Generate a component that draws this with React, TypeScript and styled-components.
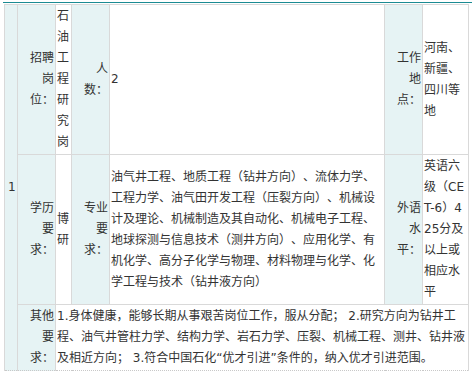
import React from "react";
import styled, { createGlobalStyle } from "styled-components";

const GlobalStyle = createGlobalStyle`
  body {
    margin: 0;
    background: #fff;
    font-family: "DejaVu Sans", "Noto Sans CJK SC", sans-serif;
    font-size: 12px;
    color: #333;
    text-spacing-trim: space-all;
  }
`;

const Page = styled.div`
  padding-top: 2px;
`;

const TopRule = styled.div`
  height: 1px;
  margin-left: 3px;
  background: #1b8b93;
`;

const Table = styled.table`
  margin: 1px 0 0 4px;
  width: 464px;
  table-layout: fixed;
  border-collapse: collapse;
  line-height: 21px;
`;

const Cell = styled.td<{ $last?: boolean }>`
  padding: 1px;
  border: 1px solid #d9d9d9;
  border-bottom-style: ${(p) => (p.$last ? "dotted" : "solid")};
  border-bottom-color: ${(p) => (p.$last ? "#c8c8c8" : "#d9d9d9")};
  vertical-align: middle;
  word-break: break-all;
  text-spacing-trim: space-all;
`;

const IndexCell = styled(Cell)`
  background: #e6f3f4;
  padding-left: 3px;
  text-align: left;
`;

const LabelCell = styled(Cell)`
  background: #e6f3f4;
  text-align: right;
`;

const ValueCell = styled(Cell)`
  background: #fff;
  text-align: left;
`;

const widths = [13, 38, 16, 38, 275, 38, 46];

const major =
  "油气井工程、地质工程（钻井方向）、流体力学、工程力学、油气田开发工程（压裂方向）、机械设计及理论、机械制造及其自动化、机械电子工程、地球探测与信息技术（测井方向）、应用化学、有机化学、高分子化学与物理、材料物理与化学、化学工程与技术（钻井液方向）";

const other =
  "1.身体健康，能够长期从事艰苦岗位工作，服从分配； 2.研究方向为钻井工程、油气井管柱力学、结构力学、岩石力学、压裂、机械工程、测井、钻井液及相近方向； 3.符合中国石化“优才引进”条件的，纳入优才引进范围。";

export default function App() {
  return (
    <Page>
      <GlobalStyle />
      <TopRule />
      <Table>
        <colgroup>
          {widths.map((w, i) => (
            <col key={i} style={{ width: w }} />
          ))}
        </colgroup>
        <tbody>
          <tr>
            <IndexCell rowSpan={3} $last>
              1
            </IndexCell>
            <LabelCell>招聘岗位：</LabelCell>
            <ValueCell>石油工程研究岗</ValueCell>
            <LabelCell>人数：</LabelCell>
            <ValueCell>2</ValueCell>
            <LabelCell>工作地点：</LabelCell>
            <ValueCell>河南、新疆、四川等地</ValueCell>
          </tr>
          <tr>
            <LabelCell>学历要求：</LabelCell>
            <ValueCell>博研</ValueCell>
            <LabelCell>专业要求：</LabelCell>
            <ValueCell>{major}</ValueCell>
            <LabelCell>外语水平：</LabelCell>
            <ValueCell>英语六级（CET-6）425分及以上或相应水平</ValueCell>
          </tr>
          <tr>
            <LabelCell $last>其他要求：</LabelCell>
            <ValueCell colSpan={5} $last>
              {other}
            </ValueCell>
          </tr>
        </tbody>
      </Table>
    </Page>
  );
}
